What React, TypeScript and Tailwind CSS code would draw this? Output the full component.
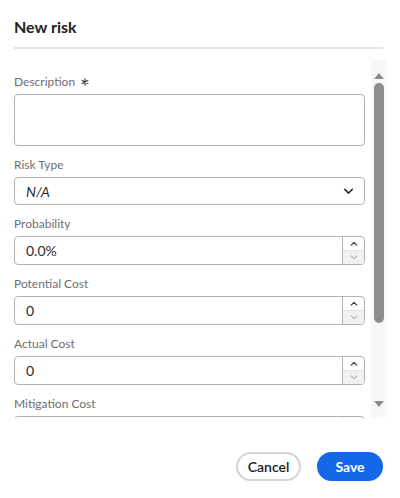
import React from 'react';

const ChevronUp = ({ className }: { className?: string }) => (
  <svg viewBox="0 0 10 6" className={className} fill="none" stroke="currentColor" strokeWidth={1.4} strokeLinecap="round" strokeLinejoin="round">
    <path d="M1.5 5 L5 1.5 L8.5 5" />
  </svg>
);

const ChevronDown = ({ className }: { className?: string }) => (
  <svg viewBox="0 0 10 6" className={className} fill="none" stroke="currentColor" strokeWidth={1.4} strokeLinecap="round" strokeLinejoin="round">
    <path d="M1.5 1 L5 4.5 L8.5 1" />
  </svg>
);

// required marker
const Asterisk = () => (
  <svg viewBox="0 0 10 10" className="w-[8px] h-[8px] ml-[6px] text-[#3a3a3a]" fill="none" stroke="currentColor" strokeWidth={1.5} strokeLinecap="round">
    <path d="M5 1 V9 M1.5 3 L8.5 7 M1.5 7 L8.5 3" />
  </svg>
);

const Label: React.FC<{ children: React.ReactNode; required?: boolean }> = ({ children, required }) => (
  <div className="flex items-center h-4 mb-1 text-[12px] text-[#6e6e6e]">
    {children}
    {required && <Asterisk />}
  </div>
);

const NumberField: React.FC<{ label: string; value: string }> = ({ label, value }) => (
  <div className="mb-[11px]">
    <Label>{label}</Label>
    <div className="flex h-[29px] border border-[#b3b3b3] rounded-[4px] overflow-hidden">
      <div className="flex-1 flex items-center pl-[11px] text-[14px] text-[#2c2c2c]">{value}</div>
      <div className="w-[22px] flex flex-col border-l border-[#b3b3b3]">
        <div className="flex-1 flex items-center justify-center text-[#3a3a3a]">
          <ChevronUp className="w-[8px] h-[5px]" />
        </div>
        <div className="flex-1 flex items-center justify-center bg-[#f1f1f1] border-t border-[#e3e3e3] text-[#b5b5b5]">
          <ChevronDown className="w-[8px] h-[5px]" />
        </div>
      </div>
    </div>
  </div>
);

export default function App() {
  return (
    <div className="w-[400px] h-[498px] bg-white flex flex-col font-['Lato','Open_Sans',sans-serif]">
      <div className="px-[14px] pt-[16px]">
        <h1 className="text-[16px] font-bold text-[#222] leading-[22px]">New risk</h1>
        <div className="mt-[9px] h-[2px] bg-[#e4e4e4] mr-[3px]" />
      </div>

      <div className="mt-[11px] h-[358px] flex pl-[14px] pr-[14px]">
        <div className="flex-1 overflow-hidden pt-[14px] pr-[6px]">
          <Label required>Description</Label>
          <div className="h-[52px] border border-[#b3b3b3] rounded-[4px] mb-[11px]" />

          <Label>Risk Type</Label>
          <div className="h-[28px] border border-[#b3b3b3] rounded-[4px] flex items-center justify-between pl-[11px] pr-[10px] mb-[11px]">
            <span className="italic text-[14px] text-[#2c2c2c]">N/A</span>
            <ChevronDown className="w-[11px] h-[7px] text-[#222]" />
          </div>

          <NumberField label="Probability" value="0.0%" />
          <NumberField label="Potential Cost" value="0" />
          <NumberField label="Actual Cost" value="0" />
          <NumberField label="Mitigation Cost" value="0" />
        </div>

        <div className="w-[15px] bg-[#f7f7f7] flex flex-col items-center">
          <div className="h-[21px] flex items-end justify-center pb-[2px]">
            <div className="w-0 h-0 border-l-[5px] border-r-[5px] border-b-[6px] border-l-transparent border-r-transparent border-b-[#8a8a8a]" />
          </div>
          <div className="mt-[2px] w-[10px] h-[240px] rounded-full bg-[#8d8d8d]" />
          <div className="flex-1" />
          <div className="h-[18px] flex items-start justify-center pt-[1px]">
            <div className="w-0 h-0 border-l-[5px] border-r-[5px] border-t-[6px] border-l-transparent border-r-transparent border-t-[#8a8a8a]" />
          </div>
        </div>
      </div>

      <div className="flex-1 flex items-start justify-end gap-[16px] pr-[17px] pt-[34px]">
        <button className="h-[29px] w-[65px] rounded-full border-2 border-[#d5d5d5] text-[14px] font-semibold text-[#222]">
          Cancel
        </button>
        <button className="h-[29px] w-[66px] rounded-full bg-[#1467e6] text-[14px] font-bold text-white">
          Save
        </button>
      </div>
    </div>
  );
}
